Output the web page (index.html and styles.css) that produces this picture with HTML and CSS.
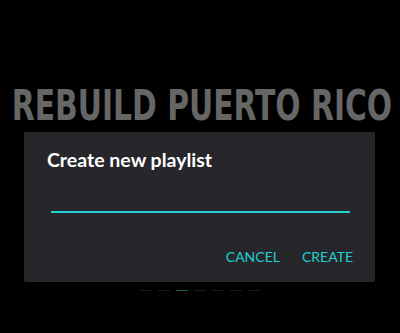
FILE: index.html
```html
<!DOCTYPE html>
<html>
<head>
<meta charset="utf-8">
<link rel="stylesheet" href="styles.css">
</head>
<body>
<div class="screen">
  <div class="hero"><span class="hero-text">REBUILD PUERTO RICO</span></div>
  <div class="dialog">
    <div class="dialog-title">Create new playlist</div>
    <div class="field"></div>
    <div class="actions">
      <span class="btn">CANCEL</span>
      <span class="btn">CREATE</span>
    </div>
  </div>
  <div class="dots">
    <span class="dot"></span><span class="dot"></span><span class="dot active"></span><span class="dot"></span><span class="dot"></span><span class="dot"></span><span class="dot"></span>
  </div>
</div>
</body>
</html>
```
FILE: styles.css
```css
html, body {
  margin: 0;
  padding: 0;
  background: #000;
}
.screen {
  width: 400px;
  height: 333px;
  overflow: hidden;
  position: relative;
}
.hero {
  padding-top: 80px;
  height: 52px;
  display: flex;
  justify-content: center;
  white-space: nowrap;
}
.hero-text {
  font-family: "DejaVu Sans Condensed", "DejaVu Sans", sans-serif;
  font-stretch: condensed;
  font-weight: 700;
  font-size: 43px;
  line-height: 50px;
  color: #666666;
  display: inline-block;
  transform: scaleX(0.77);
  margin-left: 4px;
}
.dialog {
  margin: 0 25px 0 24px;
  height: 150px;
  background: #27272b;
  border-radius: 2px;
  box-sizing: border-box;
  padding: 16px 22px 0 23px;
  position: relative;
}
.dialog-title {
  font-family: "Lato", sans-serif;
  font-weight: 700;
  font-size: 19.5px;
  line-height: 24px;
  color: #ffffff;
}
.field {
  margin: 39px 3px 0 4px;
  height: 2px;
  background: #1fd0d4;
}
.actions {
  display: flex;
  justify-content: flex-end;
  gap: 22px;
  margin-top: 35px;
}
.btn {
  font-family: "Lato", sans-serif;
  font-weight: 400;
  font-size: 14px;
  line-height: 18px;
  color: #1fd0d4;
}
.dots {
  display: flex;
  justify-content: center;
  gap: 6px;
  margin-top: 8px;
}
.dot {
  width: 12px;
  height: 1px;
  background: #1a1a1c;
}
.dot.active {
  background: #1c5a55;
}
```
